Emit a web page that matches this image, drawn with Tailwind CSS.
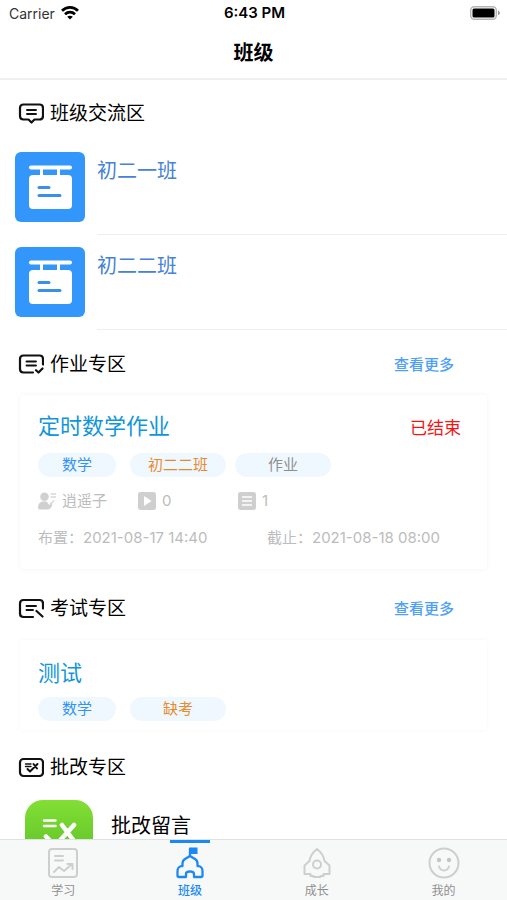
<!DOCTYPE html>
<html lang="zh-CN">
<head>
<meta charset="utf-8">
<meta name="viewport" content="width=device-width, initial-scale=1">
<title>班级</title>
<script src="https://cdn.jsdelivr.net/npm/@tailwindcss/browser@4"></script>
</head>
<body class="flex h-screen flex-col overflow-hidden bg-white font-['Inter','Noto_Sans_CJK_SC',sans-serif] text-black">

<header class="shrink-0 border-b-2 border-[#efefef]">
  <div class="grid h-7 grid-cols-3 items-center pr-[7px] pb-[2px] pl-[9px] text-[14px]">
    <div class="flex items-center gap-[6px] text-[#333]">
      <span>Carrier</span>
      <svg class="h-[14px] w-[18px]" viewBox="0 0 18 14" fill="none" stroke="#000" stroke-width="2.8" aria-hidden="true">
        <path d="M1 4.800C5.500 .3 12.500 .3 17 4.800"/><path d="M4 8.300C7 5.500 11 5.500 14 8.300"/>
        <path d="M9 13.500L6.200 10.700C7.800 9.300 10.200 9.300 11.800 10.700Z" fill="#000" stroke="none"/>
      </svg>
    </div>
    <span class="text-center text-[15px] font-semibold">6:43 PM</span>
    <svg class="h-[14px] w-[30px] justify-self-end" viewBox="0 0 30 14" aria-hidden="true">
      <rect x=".7" y=".7" width="25.600" height="12.600" rx="3.500" fill="#fff" stroke="#b5b5b5" stroke-width="1.400"/>
      <rect x="2.500" y="2.500" width="22" height="9" rx="1.500" fill="#000"/>
      <path d="M28 4.800C30.500 5.500 30.500 8.500 28 9.200Z" fill="#999"/>
    </svg>
  </div>
  <h1 class="flex h-[50px] items-center justify-center text-[20px] font-bold">班级</h1>
</header>

<main class="min-h-0 flex-1 overflow-hidden">
  <section class="pt-[8px]">
    <h2 class="flex h-[52px] items-center gap-[6px] pl-[18px] text-[19px]">
      <svg class="h-[22px] w-[26px]" viewBox="0 0 26 22" fill="none" stroke="#111" stroke-width="2.200" stroke-linecap="round" stroke-linejoin="round" aria-hidden="true">
        <path d="M5.500 1.500H21.500Q25 1.500 25 5V13Q25 16.500 21.500 16.500H16.500L13.500 19.500L10.500 16.500H5.500Q2 16.500 2 13V5Q2 1.500 5.500 1.500Z"/>
        <path d="M9 7H18M9 11H18" stroke-width="1.900"/>
      </svg>
      <span class="pt-px">班级交流区</span>
    </h2>
    <ul>
      <li class="flex gap-[12px] pl-[15px]">
        <div class="h-[95px] pt-[12px]">
          <svg class="size-[70px]" viewBox="0 0 70 70" aria-hidden="true">
            <rect width="70" height="70" rx="6" fill="#3396fb"/>
            <g fill="#fff"><rect x="14" y="13.500" width="43" height="4" rx="2"/><rect x="25" y="16" width="3" height="9"/><rect x="42" y="16" width="3" height="9"/><rect x="14" y="23" width="43" height="34" rx="4"/></g>
            <path d="M24 35.500H34M24 43.500H45" stroke="#3a8fe8" stroke-width="3" stroke-linecap="round"/>
          </svg>
        </div>
        <a href="#" class="flex-1 border-b border-[#eee] pt-[17px] text-[20px] leading-[28px] text-[#4682d8]">初二一班</a>
      </li>
      <li class="flex gap-[12px] pl-[15px]">
        <div class="h-[95px] pt-[12px]">
          <svg class="size-[70px]" viewBox="0 0 70 70" aria-hidden="true">
            <rect width="70" height="70" rx="6" fill="#3396fb"/>
            <g fill="#fff"><rect x="14" y="13.500" width="43" height="4" rx="2"/><rect x="25" y="16" width="3" height="9"/><rect x="42" y="16" width="3" height="9"/><rect x="14" y="23" width="43" height="34" rx="4"/></g>
            <path d="M24 35.500H34M24 43.500H45" stroke="#3a8fe8" stroke-width="3" stroke-linecap="round"/>
          </svg>
        </div>
        <a href="#" class="flex-1 border-b border-[#eee] pt-[17px] text-[20px] leading-[28px] text-[#4682d8]">初二二班</a>
      </li>
    </ul>
  </section>

  <section class="pt-[8px]">
    <div class="flex h-[54px] items-center justify-between pr-[53px] pl-[18px]">
      <h2 class="flex items-center gap-[6px] text-[19px]">
        <svg class="h-[22px] w-[26px]" viewBox="0 0 26 22" fill="none" stroke="#111" stroke-width="2.200" stroke-linecap="round" stroke-linejoin="round" aria-hidden="true">
          <path d="M25 10.500V5Q25 1.500 21.500 1.500H5.500Q2 1.500 2 5V15Q2 18.500 5.500 18.500H15"/>
          <path d="M8.500 7.500H18M8.500 11.500H18" stroke-width="1.900"/><path d="M18 16.200L20.500 18.500L24.500 14.500"/>
        </svg>
        <span class="pt-px">作业专区</span>
      </h2>
      <a href="#" class="pt-px text-[15px] font-medium text-[#4da0f5]">查看更多</a>
    </div>
    <article class="mx-[20px] mt-[3px] rounded-[4px] pr-[26px] pl-[18px] pt-[14px] pb-[19px] shadow-[0_0_5px_rgba(0,0,0,0.05)]">
      <div class="flex h-[34px] items-center justify-between">
        <h3 class="text-[22px] text-[#1296db]">定时数学作业</h3>
        <span class="pt-[5px] text-[17px] text-[#f41414]">已结束</span>
      </div>
      <div class="mt-[10px] flex h-6 text-[15px] leading-6">
        <span class="w-[78px] rounded-full bg-[#f0f8ff] text-center text-[#3293f5]">数学</span>
        <span class="ml-[14px] w-[96px] rounded-full bg-[#f0f8ff] text-center text-[#e88a2c]">初二二班</span>
        <span class="ml-[9px] w-[96px] rounded-full bg-[#f0f8ff] text-center text-[#8f8f8f]">作业</span>
      </div>
      <div class="mt-[12px] flex h-6 items-center text-[15px] text-[#bcbcbc]">
        <span class="flex w-[100px] items-center gap-[6px]">
          <svg class="size-[18px]" viewBox="0 0 18 18" fill="#d0d0d0" aria-hidden="true"><circle cx="6.500" cy="4.800" r="4.300"/><path d="M0 15.500Q0 10.500 4.500 9.500H8.500L11.500 13L14.500 10.500Q14 17.500 9 17.500H2Q0 17.500 0 15.500Z"/><path d="M12.500 2H18M12.500 5H18M12 12L16.500 8.500" stroke="#d8d8d8" stroke-width="1.300"/></svg>
          逍遥子
        </span>
        <span class="flex w-[100px] items-center gap-[6px]">
          <svg class="size-[18px]" viewBox="0 0 18 18" aria-hidden="true"><rect width="18" height="18" rx="2.500" fill="#cfcfcf"/><path d="M6 4V14L13.500 9Z" fill="#fff"/></svg>
          0
        </span>
        <span class="flex items-center gap-[6px]">
          <svg class="size-[18px]" viewBox="0 0 18 18" aria-hidden="true"><rect width="18" height="18" rx="2.500" fill="#cfcfcf"/><path d="M4 5H14M4 9H14M4 13H14" stroke="#fff" stroke-width="1.600"/></svg>
          1
        </span>
      </div>
      <div class="mt-[13px] flex h-6 items-center text-[15px] text-[#bcbcbc]">
        <span class="w-[229px]">布置：2021-08-17 14:40</span>
        <span class="whitespace-nowrap">截止：2021-08-18 08:00</span>
      </div>
    </article>
  </section>

  <section class="pt-[12px]">
    <div class="flex h-[56px] items-center justify-between pr-[53px] pl-[18px]">
      <h2 class="flex items-center gap-[6px] text-[19px]">
        <svg class="h-[22px] w-[26px]" viewBox="0 0 26 22" fill="none" stroke="#111" stroke-width="2.200" stroke-linecap="round" stroke-linejoin="round" aria-hidden="true">
          <path d="M25 10.500V5.500Q25 2 21.500 2H5.500Q2 2 2 5.500V15.500Q2 19 5.500 19H15"/>
          <path d="M8.500 8H18M8.500 12H15" stroke-width="1.900"/><path d="M18.500 13L24.500 18.500"/>
        </svg>
        <span class="pt-px">考试专区</span>
      </h2>
      <a href="#" class="pt-px text-[15px] font-medium text-[#4da0f5]">查看更多</a>
    </div>
    <article class="mx-[20px] mt-[3px] px-[18px] pt-[16px] pb-[9px] shadow-[0_0_4px_rgba(0,0,0,0.04)]">
      <h3 class="flex h-[34px] items-center text-[22px] text-[#1296db]">测试</h3>
      <div class="mt-[7px] flex h-6 text-[15px] leading-6">
        <span class="w-[78px] rounded-full bg-[#f0f8ff] text-center text-[#3293f5]">数学</span>
        <span class="ml-[14px] w-[96px] rounded-full bg-[#f0f8ff] text-center text-[#e88a2c]">缺考</span>
      </div>
    </article>
  </section>

  <section class="pt-[11px]">
    <h2 class="flex h-[54px] items-center gap-[6px] pl-[18px] text-[19px]">
      <svg class="h-[22px] w-[26px]" viewBox="0 0 26 22" fill="none" stroke="#111" stroke-width="2.200" stroke-linecap="round" stroke-linejoin="round" aria-hidden="true">
        <rect x="2" y="2" width="23" height="17" rx="3.500"/>
        <path d="M7.500 7H13M7.500 9.500H13" stroke-width="1.400"/><path d="M15.500 7L19 11.500M19.500 7L12 14.500L9.500 12" stroke-width="2"/>
      </svg>
      <span class="pt-px">批改专区</span>
    </h2>
    <a href="#" class="flex items-start gap-[18px] pt-[5px] pl-[25px]">
      <svg class="size-[68px]" viewBox="0 0 68 68" aria-hidden="true">
        <defs><linearGradient id="leaf" x2="0" y2="1"><stop stop-color="#83df35"/><stop offset="1" stop-color="#58bd25"/></linearGradient></defs>
        <rect width="68" height="68" rx="18" fill="url(#leaf)"/>
        <path d="M19 20.500H30.500M19 26H30.500" stroke="#fff" stroke-width="2.500" stroke-linecap="round"/>
        <path d="M37 25L49 41M49 25L30 46L21 36.500" fill="none" stroke="#fff" stroke-width="4.500" stroke-linecap="round" stroke-linejoin="round"/>
      </svg>
      <span class="pt-[12px] text-[20px] leading-[28px]">批改留言</span>
    </a>
  </section>
</main>

<nav class="grid h-[61px] shrink-0 grid-cols-4 border-t border-[#dfe2e2] bg-[#f7f9f9] text-[12px] text-[#8f8f8f]">
  <a href="#" class="flex flex-col items-center pt-[7px]">
    <svg class="size-8" viewBox="0 0 32 32" fill="none" stroke="#cdcfcf" stroke-width="2" stroke-linecap="round" stroke-linejoin="round" aria-hidden="true"><rect x="2" y="2" width="28" height="28" rx="3"/><path d="M8 9H16M8 13.500H16M7 25L12 20L17 24L25 17M20.500 17H25.500V22"/></svg>
    <span class="mt-[3px] leading-[18px]">学习</span>
  </a>
  <a href="#" aria-current="page" class="relative flex flex-col items-center pt-[7px] font-medium text-[#1b89f5]">
    <span class="absolute top-0 h-[3px] w-10 bg-[#1b89f5]"></span>
    <svg class="size-8" viewBox="0 0 32 32" fill="none" stroke="#1b89f5" stroke-width="2.300" stroke-linecap="round" stroke-linejoin="round" aria-hidden="true"><path d="M16 2V9"/><path d="M15.500 .5H23.500V7H15.500Z" fill="#1b89f5" stroke="none"/><path d="M16 9L11 12Q8.500 13.500 8.500 16.500V19H7.500Q3.500 20 3.500 24V28.500Q3.500 30 5 30H12V27Q12 24.500 16 24.500T20 27V30H27Q28.500 30 28.500 28.500V24Q28.500 20 24.500 19H23.500V16.500Q23.500 13.500 21 12Z"/></svg>
    <span class="mt-[3px] leading-[18px]">班级</span>
  </a>
  <a href="#" class="flex flex-col items-center pt-[7px]">
    <svg class="size-8" viewBox="0 0 32 32" fill="none" stroke="#cdcfcf" stroke-width="2" stroke-linejoin="round" aria-hidden="true"><path d="M16 2Q9.500 7 8.500 14L3.500 18.500V27H9.500V29H12.500V30H19.500V29H22.500V27H28.500V18.500L23.500 14Q22.500 7 16 2Z"/><circle cx="16" cy="17.500" r="4"/></svg>
    <span class="mt-[3px] leading-[18px]">成长</span>
  </a>
  <a href="#" class="flex flex-col items-center pt-[7px]">
    <svg class="size-8" viewBox="0 0 32 32" fill="none" stroke="#cdcfcf" stroke-width="2" stroke-linecap="round" aria-hidden="true"><circle cx="16" cy="16" r="14.500"/><path d="M11 19.500Q12.500 23.500 16 23.500T21 19.500"/><circle cx="11" cy="13" r="2.200" fill="#c4c6c6" stroke="none"/><circle cx="21" cy="13" r="2.200" fill="#c4c6c6" stroke="none"/></svg>
    <span class="mt-[3px] leading-[18px]">我的</span>
  </a>
</nav>
</body>
</html>
